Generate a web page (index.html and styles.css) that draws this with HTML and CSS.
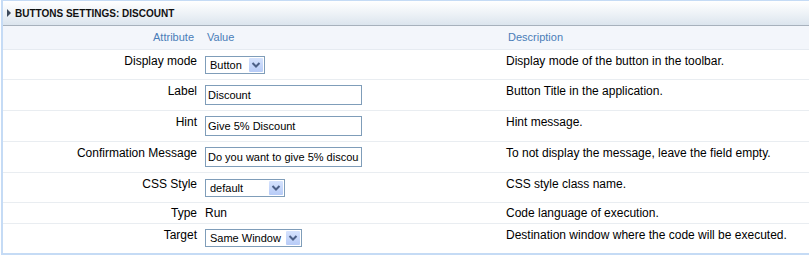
FILE: index.html
```html
<!DOCTYPE html>
<html lang="en">

<head>
    <meta charset="UTF-8">
    <title>Buttons Settings</title>
    <link rel="stylesheet" href="styles.css">
</head>

<body>
    <div class="painel">
        <div class="titulo">
            <span class="seta"></span>
            <span>BUTTONS SETTINGS: DISCOUNT</span>
        </div>

        <table>
            <thead>
                <tr>
                    <th class="col-attr">Attribute</th>
                    <th class="col-valor">Value</th>
                    <th>Description</th>
                </tr>
            </thead>
            <tbody>
                <tr class="linha-combo">
                    <td class="col-attr">Display mode</td>
                    <td class="col-valor">
                        <div class="combo combo-modo">
                            <select><option>Button</option></select>
                            <span class="combo-btn"><svg width="14" height="14" viewBox="0 0 14 14"><polyline points="3.5,5 7,8.5 10.5,5" fill="none" stroke="#4b5f86" stroke-width="2"/></svg></span>
                        </div>
                    </td>
                    <td>Display mode of the button in the toolbar.</td>
                </tr>
                <tr>
                    <td class="col-attr">Label</td>
                    <td class="col-valor"><input type="text" value="Discount"></td>
                    <td>Button Title in the application.</td>
                </tr>
                <tr>
                    <td class="col-attr">Hint</td>
                    <td class="col-valor"><input type="text" value="Give 5% Discount"></td>
                    <td>Hint message.</td>
                </tr>
                <tr>
                    <td class="col-attr">Confirmation Message</td>
                    <td class="col-valor"><input type="text" value="Do you want to give 5% discount?"></td>
                    <td>To not display the message, leave the field empty.</td>
                </tr>
                <tr class="linha-combo">
                    <td class="col-attr">CSS Style</td>
                    <td class="col-valor">
                        <div class="combo combo-css">
                            <select><option>default</option></select>
                            <span class="combo-btn"><svg width="14" height="14" viewBox="0 0 14 14"><polyline points="3.5,5 7,8.5 10.5,5" fill="none" stroke="#4b5f86" stroke-width="2"/></svg></span>
                        </div>
                    </td>
                    <td>CSS style class name.</td>
                </tr>
                <tr class="linha-texto">
                    <td class="col-attr">Type</td>
                    <td class="col-valor">Run</td>
                    <td>Code language of execution.</td>
                </tr>
                <tr class="ultima">
                    <td class="col-attr">Target</td>
                    <td class="col-valor">
                        <div class="combo combo-alvo">
                            <select><option>Same Window</option></select>
                            <span class="combo-btn"><svg width="14" height="14" viewBox="0 0 14 14"><polyline points="3.5,5 7,8.5 10.5,5" fill="none" stroke="#4b5f86" stroke-width="2"/></svg></span>
                        </div>
                    </td>
                    <td>Destination window where the code will be executed.</td>
                </tr>
            </tbody>
        </table>
    </div>
</body>

</html>
```

FILE: styles.css
```css
body {
    font-family: "Liberation Sans", Arial, sans-serif;
    font-size: 12px;
    color: #000;
    background-color: #fff;
    margin: 0;
    padding: 0;
}

.painel {
    margin-left: 1px;
    border-left: 2px solid #c5dbf5;
    border-top: 1px solid #c5dbf5;
    border-bottom: 2px solid #c5dbf5;
}

.titulo {
    display: flex;
    align-items: center;
    gap: 4px;
    height: 24px;
    padding-left: 4px;
    background: linear-gradient(#ffffff, #f0f4f8 45%, #dce5ee);
    border-bottom: 1px solid #a7b1bc;
    font-size: 10px;
    font-weight: bold;
    color: #111;
}

.seta {
    width: 0;
    height: 0;
    border-top: 4px solid transparent;
    border-bottom: 4px solid transparent;
    border-left: 4px solid #3e4b5c;
}

table {
    width: 100%;
    border-collapse: collapse;
    table-layout: fixed;
}

th,
td {
    box-sizing: border-box;
}

th {
    height: 23px;
    padding: 0 6px;
    background-color: #f3f6fb;
    color: #4a7db8;
    font-size: 11px;
    font-weight: normal;
    text-align: left;
    border-bottom: 1px solid #e6ebf1;
}

th.col-attr {
    text-align: right;
    padding-right: 7px;
}

td {
    padding: 4px 4px 5px;
    line-height: 14px;
    vertical-align: top;
    border-bottom: 1px solid #e9edf1;
}

tr.ultima td {
    border-bottom: none;
}

.col-attr {
    width: 198px;
    text-align: right;
}

.col-valor {
    width: 301px;
}

td.col-valor {
    padding: 5px 4px 5px 4px;
}

tr.linha-combo td.col-valor {
    padding-top: 6px;
}

tr.ultima td.col-valor {
    padding-top: 5px;
    padding-bottom: 6px;
}

tr.linha-texto td {
    padding-top: 3px;
    padding-bottom: 3px;
}

input {
    display: block;
    width: 157px;
    height: 20px;
    margin: 0;
    padding: 0 2px;
    border: 1px solid #7f9db9;
    box-sizing: border-box;
    font-family: "Liberation Sans", Arial, sans-serif;
    font-size: 11px;
    color: #000;
    background-color: #fff;
}

.combo {
    position: relative;
    height: 18px;
}

.combo-modo {
    width: 60px;
}

.combo-css {
    width: 80px;
}

.combo-alvo {
    width: 97px;
}

.combo select {
    appearance: none;
    -webkit-appearance: none;
    width: 100%;
    height: 18px;
    margin: 0;
    padding: 0 0 0 4px;
    border: 1px solid #7f9db9;
    border-radius: 0;
    background-color: #fff;
    font-family: "Liberation Sans", Arial, sans-serif;
    font-size: 11px;
    color: #000;
}

.combo-btn {
    position: absolute;
    top: 2px;
    right: 2px;
    width: 14px;
    height: 14px;
    background: linear-gradient(#d6e3fd, #b7cbf7);
    border-radius: 1px;
    box-sizing: border-box;
    pointer-events: none;
}

.combo-btn svg {
    display: block;
}
```
